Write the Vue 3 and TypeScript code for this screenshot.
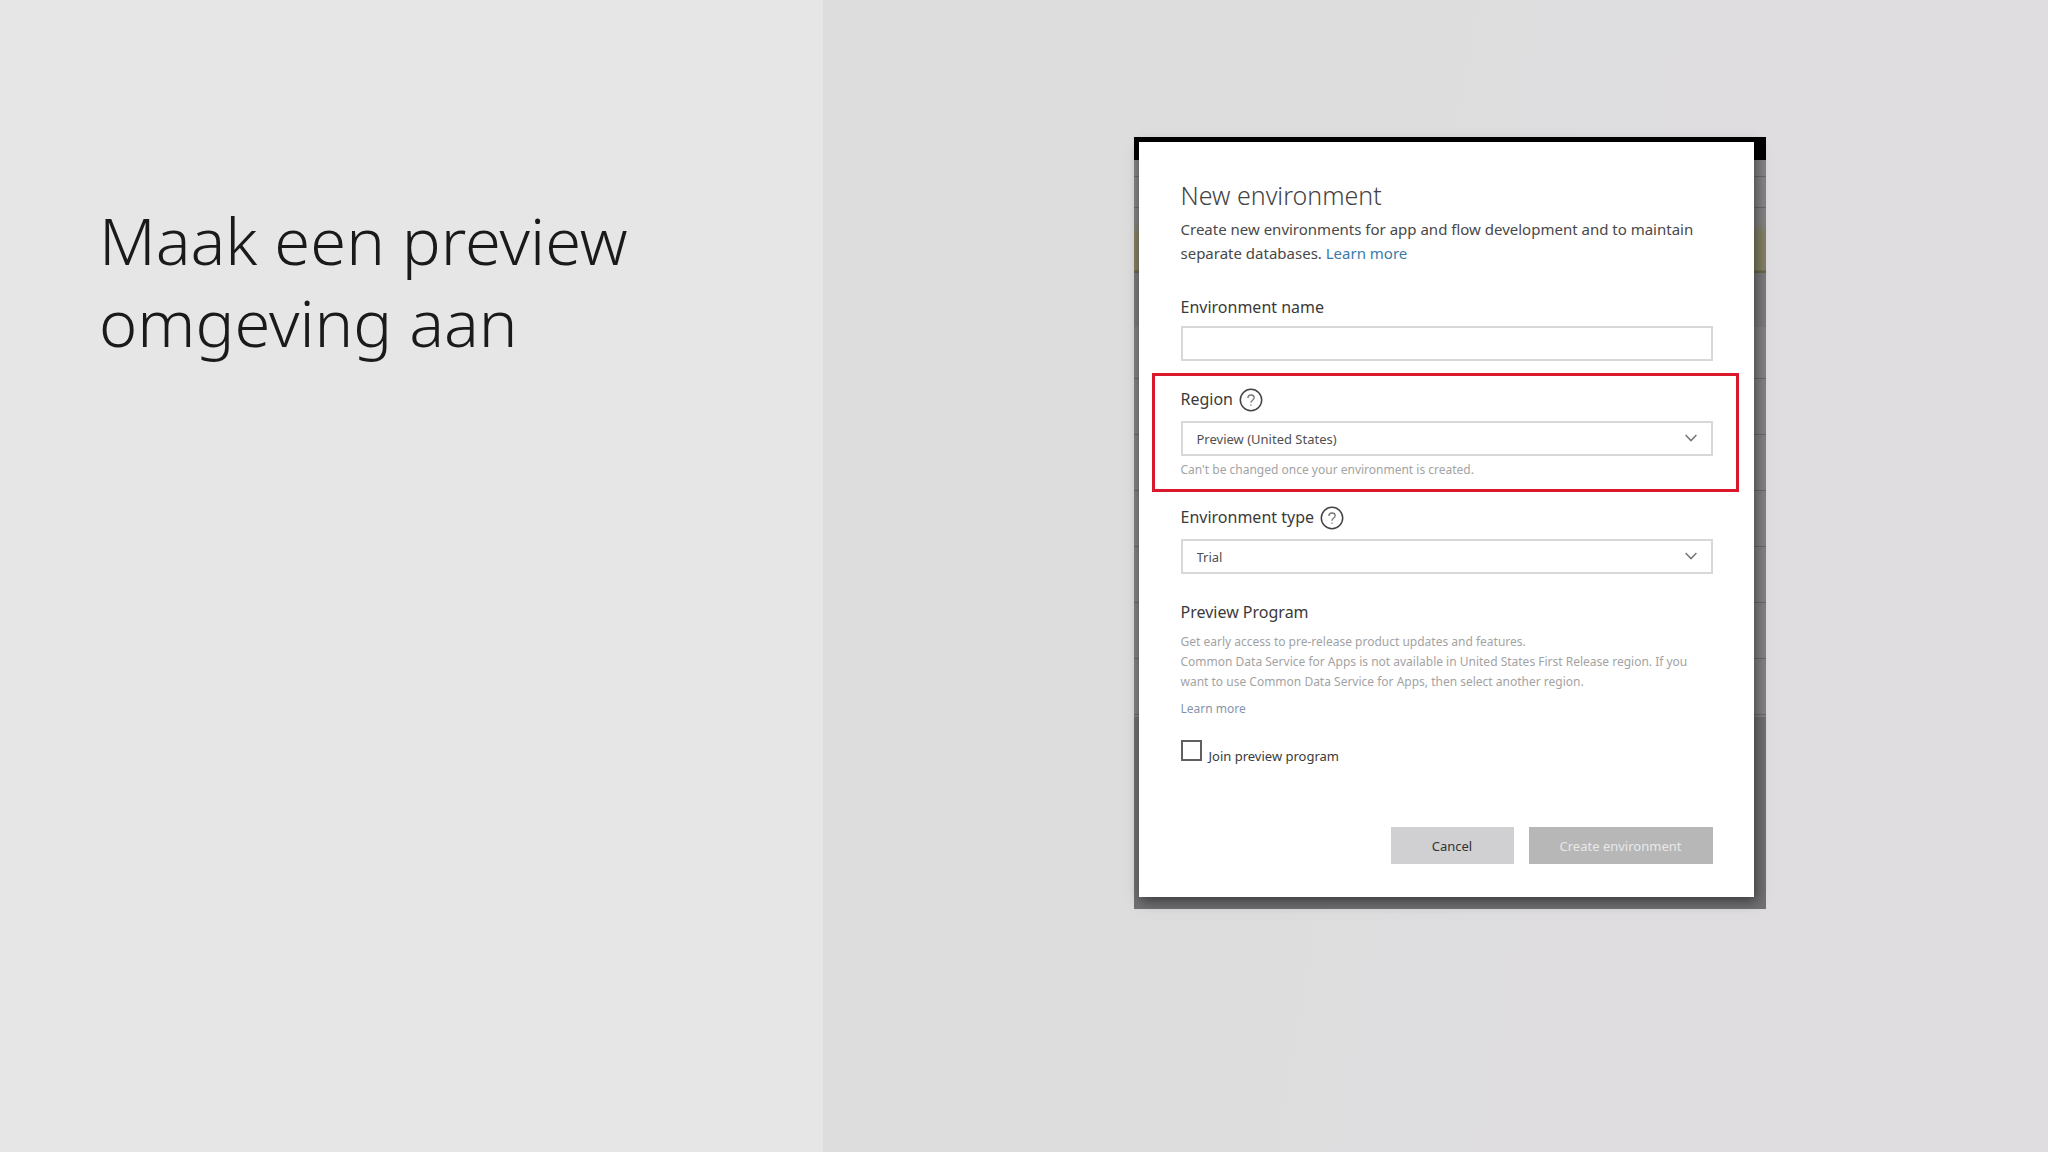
<script setup lang="ts">
import { ref } from 'vue'

const environmentName = ref('')
const region = ref('Preview (United States)')
const environmentType = ref('Trial')
const joinPreview = ref(false)
</script>

<template>
  <main class="slide">
    <section class="intro">
      <h1>Maak een preview<br />omgeving aan</h1>
    </section>

    <section class="stage">
      <div class="backdrop">
        <form class="dialog" @submit.prevent>
          <h2>New environment</h2>
          <p class="lead">
            Create new environments for app and flow development and to maintain<br />separate databases.
            <a href="#">Learn more</a>
          </p>

          <div class="field name-field">
            <label for="env-name">Environment name</label>
            <input id="env-name" v-model="environmentName" class="control" type="text" />
          </div>

          <div class="field highlighted">
            <div class="label-row">
              <label for="env-region">Region</label>
              <svg class="help" viewBox="0 0 24 24" aria-hidden="true">
                <circle cx="12" cy="13" r="10.7" />
                <path d="M8.9 10.9C8.9 9 10.2 8 12 8s3.2 1.1 3.2 2.8c0 2.4-3.3 2.7-3.3 5M11.9 17.4v1.4" />
              </svg>
            </div>
            <div class="select">
              <select id="env-region" v-model="region" class="control">
                <option>Preview (United States)</option>
              </select>
              <svg class="chevron" viewBox="0 0 12 8" aria-hidden="true"><path d="M.6 1 6 6.6 11.4 1" /></svg>
            </div>
            <p class="hint">Can't be changed once your environment is created.</p>
          </div>

          <div class="field type-field">
            <div class="label-row">
              <label for="env-type">Environment type</label>
              <svg class="help" viewBox="0 0 24 24" aria-hidden="true">
                <circle cx="12" cy="13" r="10.7" />
                <path d="M8.9 10.9C8.9 9 10.2 8 12 8s3.2 1.1 3.2 2.8c0 2.4-3.3 2.7-3.3 5M11.9 17.4v1.4" />
              </svg>
            </div>
            <div class="select">
              <select id="env-type" v-model="environmentType" class="control">
                <option>Trial</option>
              </select>
              <svg class="chevron" viewBox="0 0 12 8" aria-hidden="true"><path d="M.6 1 6 6.6 11.4 1" /></svg>
            </div>
          </div>

          <div class="program">
            <h3>Preview Program</h3>
            <p class="note">
              Get early access to pre-release product updates and features.<br />
              Common Data Service for Apps is not available in United States First Release region. If you<br />
              want to use Common Data Service for Apps, then select another region.
            </p>
            <a class="note-link" href="#">Learn more</a>
            <div class="join">
              <input id="join" v-model="joinPreview" type="checkbox" />
              <label for="join">Join preview program</label>
            </div>
          </div>

          <div class="actions">
            <button class="cancel" type="button">Cancel</button>
            <button class="create" type="submit" disabled>Create environment</button>
          </div>
        </form>
      </div>
    </section>
  </main>
</template>

<style>
body {
  background: #dddddd;
}
</style>

<style scoped>
.slide {
  display: grid;
  grid-template-columns: 823fr 1225fr;
  min-height: 100vh;
  font-family: 'Noto Sans', 'Open Sans', sans-serif;
  color: #484848;
}

.intro {
  background: #e6e6e6;
  padding: 199px 40px 40px 99px;
}

h1,
h2,
h3,
p {
  margin: 0;
}

h1 {
  font-size: 65px;
  font-weight: 300;
  line-height: 82px;
  color: #1a1a1a;
}

.stage {
  display: flex;
  justify-content: center;
  align-items: flex-start;
  padding: 137px 0 40px 28px;
  background: linear-gradient(100deg, #dddddd 30%, #dfdde0 70%);
}

/* Dimmed page behind the dialog: top bar, header rules, notice band, list rows */
.backdrop {
  padding: 5px 12px 12px 5px;
  background:
    linear-gradient(#000 23px, transparent 23px),
    linear-gradient(
      #858585 39px,
      #6a6a6a 39px,
      #6a6a6a 40px,
      #858585 40px,
      #858585 70px,
      #6a6a6a 70px,
      #6a6a6a 71px,
      #838383 71px,
      #838383 84px,
      #858064 100px,
      #858064 133px,
      #6a6750 134px,
      #6a6750 136px,
      #7c7c7c 136px,
      #7c7c7c 190px,
      transparent 190px
    ),
    linear-gradient(transparent 580px, #717073 580px),
    repeating-linear-gradient(#838383 0, #838383 17px, #6a6a6a 17px, #6a6a6a 18px, #838383 18px, #838383 56px);
}

.dialog {
  box-sizing: border-box;
  width: 615px;
  padding: 35px 41px 33px 42px;
  background: #fff;
  box-shadow: 2px 4px 12px rgba(0, 0, 0, 0.5);
}

h2 {
  font-size: 25px;
  font-weight: 300;
  line-height: 36px;
  color: #444;
}

.lead {
  margin-top: 4px;
  font-size: 15px;
  line-height: 24px;
  white-space: nowrap;
}

a {
  color: #3a7aa8;
  text-decoration: none;
}

label,
h3 {
  display: block;
  font-size: 16px;
  font-weight: 400;
  line-height: 24px;
  color: #3a3a3a;
}

.name-field {
  margin-top: 30px;
}

.control {
  display: block;
  box-sizing: border-box;
  width: 100%;
  height: 35px;
  margin: 0;
  padding: 0 14px;
  border: 2px solid #d8d8da;
  border-radius: 0;
  background: #fff;
  color: #505050;
  font: 13px / 20px 'Noto Sans', 'Open Sans', sans-serif;
  appearance: none;
}

.name-field .control {
  margin-top: 7px;
}

.label-row {
  display: flex;
  align-items: center;
  gap: 6px;
  height: 24px;
  margin-bottom: 10px;
}

.help {
  width: 24px;
  height: 24px;
  overflow: visible;
  fill: none;
  stroke: #444;
  stroke-width: 1.5;
}

.help path {
  stroke: #777;
  stroke-width: 1.3;
}

.select {
  position: relative;
}

.chevron {
  position: absolute;
  right: 16px;
  top: 13px;
  width: 12px;
  height: 8px;
  fill: none;
  stroke: #777;
  stroke-width: 1.5;
  pointer-events: none;
}

.highlighted {
  margin: 12px -26px 0 -29px;
  padding: 11px 23px 9px 26px;
  border: 3px solid #d9182b;
}

.hint,
.note,
.note-link {
  font-size: 12px;
  line-height: 20px;
  color: #a3a3a3;
  white-space: nowrap;
}

.hint {
  margin-top: 4px;
}

.type-field {
  margin-top: 13px;
}

.program {
  margin-top: 26px;
}

.note {
  margin-top: 8px;
}

.note-link {
  display: block;
  width: max-content;
  margin-top: 7px;
  color: #8496ac;
}

.join {
  display: flex;
  align-items: flex-start;
  gap: 7px;
  margin-top: 21px;
}

.join input {
  width: 21px;
  height: 21px;
  margin: 0;
  border: 2px solid #606060;
  border-radius: 0;
  background: #fff;
  appearance: none;
}

.join label {
  padding-top: 6px;
  font-size: 13px;
  line-height: 20px;
}

.actions {
  display: flex;
  justify-content: flex-end;
  gap: 15px;
  margin-top: 61px;
}

button {
  height: 37px;
  padding: 0;
  border: 0;
  font: 13px / 20px 'Noto Sans', 'Open Sans', sans-serif;
}

.cancel {
  width: 123px;
  background: #d0d0d2;
  color: #333;
}

.create {
  width: 184px;
  background: #b7b7b8;
  color: #e8e8e8;
}
</style>
